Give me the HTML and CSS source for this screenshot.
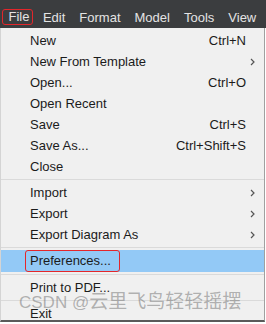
FILE: index.html
```html
<!DOCTYPE html>
<html lang="en">
<head>
    <meta charset="UTF-8">
    <title>File menu</title>
    <link rel="stylesheet" href="styles.css">
</head>
<body>
    <div class="menubar">
        <span class="menu-title marked">File</span>
        <span class="menu-title">Edit</span>
        <span class="menu-title">Format</span>
        <span class="menu-title">Model</span>
        <span class="menu-title">Tools</span>
        <span class="menu-title">View</span>
    </div>

    <div class="menu">
        <div class="item"><span class="label">New</span><span class="key">Ctrl+N</span><span class="sub"></span></div>
        <div class="item"><span class="label">New From Template</span><span class="key"></span><span class="sub"><svg width="5" height="8" viewBox="0 0 5 8"><path d="M1 1l3 3-3 3" fill="none" stroke="#555" stroke-width="1.2"/></svg></span></div>
        <div class="item"><span class="label">Open...</span><span class="key">Ctrl+O</span><span class="sub"></span></div>
        <div class="item"><span class="label">Open Recent</span><span class="key"></span><span class="sub"></span></div>
        <div class="item"><span class="label">Save</span><span class="key">Ctrl+S</span><span class="sub"></span></div>
        <div class="item"><span class="label">Save As...</span><span class="key">Ctrl+Shift+S</span><span class="sub"></span></div>
        <div class="item"><span class="label">Close</span><span class="key"></span><span class="sub"></span></div>
        <div class="separator"></div>
        <div class="item"><span class="label">Import</span><span class="key"></span><span class="sub"><svg width="5" height="8" viewBox="0 0 5 8"><path d="M1 1l3 3-3 3" fill="none" stroke="#555" stroke-width="1.2"/></svg></span></div>
        <div class="item"><span class="label">Export</span><span class="key"></span><span class="sub"><svg width="5" height="8" viewBox="0 0 5 8"><path d="M1 1l3 3-3 3" fill="none" stroke="#555" stroke-width="1.2"/></svg></span></div>
        <div class="item"><span class="label">Export Diagram As</span><span class="key"></span><span class="sub"><svg width="5" height="8" viewBox="0 0 5 8"><path d="M1 1l3 3-3 3" fill="none" stroke="#555" stroke-width="1.2"/></svg></span></div>
        <div class="separator"></div>
        <div class="item active"><span class="label"><span class="marked-item">Preferences...</span></span><span class="key"></span><span class="sub"></span></div>
        <div class="separator"></div>
        <div class="item"><span class="label">Print to PDF...</span><span class="key"></span><span class="sub"></span></div>
        <div class="separator"></div>
        <div class="item"><span class="label">Exit</span><span class="key"></span><span class="sub"></span></div>
    </div>

    <div class="watermark"><span class="watermark-latin">CSDN @</span>云里飞鸟轻轻摇摆</div>
</body>
</html>
```

FILE: styles.css
```css
body {
    margin: 0;
    padding: 0;
    width: 266px;
    height: 324px;
    overflow: hidden;
    background-color: #ffffff;
    font-family: 'Liberation Sans', 'Noto Sans CJK SC', sans-serif;
    font-size: 13px;
    color: #1b1b1b;
    position: relative;
}

.menubar {
    height: 28px;
    box-sizing: border-box;
    padding: 9px 0 0 9px;
    display: flex;
    gap: 14px;
    background-color: #3b3d3f;
    color: #e4e4e4;
    font-size: 13px;
    line-height: 17px;
    white-space: nowrap;
}

.menu-title.marked {
    border: 1.5px solid #e3262b;
    border-radius: 3px;
    margin: 0 -4px 0 -7.5px;
    padding: 0 2.5px 0 6px;
    line-height: 14px;
    height: 14px;
}

.menu {
    height: 294px;
    box-sizing: border-box;
    background-color: #f0f0f0;
    border-left: 1px solid #d4d4d4;
    border-right: 1px solid #a0a0a0;
    border-bottom: 2px solid #5a5a5a;
    margin-right: 1px;
    padding-top: 2px;
}

.item {
    height: 21px;
    display: flex;
    align-items: center;
    padding-left: 29px;
    line-height: 21px;
}

.label {
    flex: 1;
}

.key {
    padding-right: 2px;
}

.sub {
    width: 14px;
    padding-left: 2px;
    display: flex;
    align-items: center;
}

.item.active {
    height: 22px;
    background-color: #93c9f6;
}

.marked-item {
    display: inline-block;
    border: 1.5px solid #e3262b;
    border-radius: 3px;
    margin-left: -5px;
    padding: 0 8px 0 4px;
    line-height: 20px;
}

.separator {
    height: 5px;
    display: flex;
    align-items: center;
}

.separator::after {
    content: '';
    flex: 1;
    height: 1px;
    background-color: #dadada;
}

.watermark {
    position: absolute;
    left: 19px;
    top: 289px;
    font-size: 19px;
    line-height: 26px;
    color: rgba(120, 120, 120, 0.55);
    white-space: nowrap;
}

.watermark-latin {
    font-size: 17px;
}
```
